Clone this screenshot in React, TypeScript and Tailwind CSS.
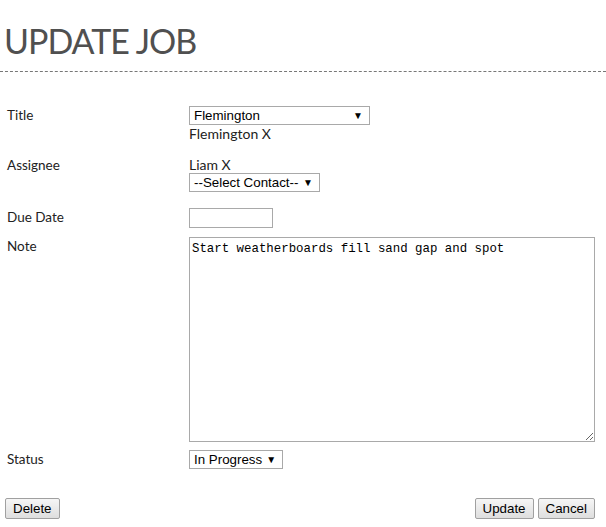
const label = "text-[13.5px] leading-[18px] text-[#222]"

function FakeSelect({ value, width }: { value: string; width: string }) {
    return (
        <div className={`flex items-center justify-between h-[19px] border border-[#a9a9a9] bg-white pl-[4px] pr-[6px] font-['Liberation_Sans',Arial,sans-serif] text-[13.33px] leading-none text-black whitespace-nowrap ${width}`}>
            <span>{value}</span>
            <span className="text-[10px] ml-[4px]">▼</span>
        </div>
    )
}

function Button({ children }: { children: React.ReactNode }) {
    return (
        <button className="h-[21px] px-[7px] border border-[#a0a0a0] rounded-[2px] bg-gradient-to-b from-[#f6f6f6] to-[#dedede] font-['Liberation_Sans',Arial,sans-serif] text-[13.33px] leading-none text-black">
            {children}
        </button>
    )
}

export default function App() {
    return (
        <div className="w-[606px] h-[527px] bg-white font-['Lato','Open_Sans',sans-serif] text-[#222]">
            <h1 className="pt-[21px] pl-[4px] text-[34px] leading-[40px] text-[#505050] font-normal tracking-[-1px]">UPDATE JOB</h1>
            <div className="mt-[10px] border-t border-dashed border-[#777]" />

            <div className="grid grid-cols-[182px_1fr] pl-[7px] pr-[11px] pt-[34px]">
                <div className={label}>Title</div>
                <div className="flex flex-col">
                    <FakeSelect value="Flemington" width="w-[181px]" />
                    <span className="text-[14px] leading-[17px]">Flemington X</span>
                </div>

                <div className={`${label} mt-[14px]`}>Assignee</div>
                <div className="flex flex-col mt-[14px]">
                    <span className="text-[14px] leading-[17px]">Liam X</span>
                    <FakeSelect value="--Select Contact--" width="w-[131px]" />
                </div>

                <div className={`${label} mt-[16px]`}>Due Date</div>
                <div className="mt-[16px]">
                    <input className="block w-[84px] h-[20px] border border-[#a9a9a9] bg-white outline-none" />
                </div>

                <div className={`${label} mt-[9px]`}>Note</div>
                <div className="mt-[9px]">
                    <textarea
                        defaultValue="Start weatherboards fill sand gap and spot"
                        className="block w-[406px] h-[205px] border border-[#a9a9a9] px-[2px] pt-[4px] font-['Liberation_Mono','DejaVu_Sans_Mono',monospace] text-[12.4px] leading-[15px] text-black outline-none resize"
                    />
                </div>

                <div className={`${label} mt-[8px]`}>Status</div>
                <div className="mt-[8px]">
                    <FakeSelect value="In Progress" width="w-[94px]" />
                </div>
            </div>

            <div className="flex justify-between items-center pl-[5px] pr-[11px] mt-[29px]">
                <Button>Delete</Button>
                <div className="flex gap-[4px]">
                    <Button>Update</Button>
                    <Button>Cancel</Button>
                </div>
            </div>
        </div>
    )
}
